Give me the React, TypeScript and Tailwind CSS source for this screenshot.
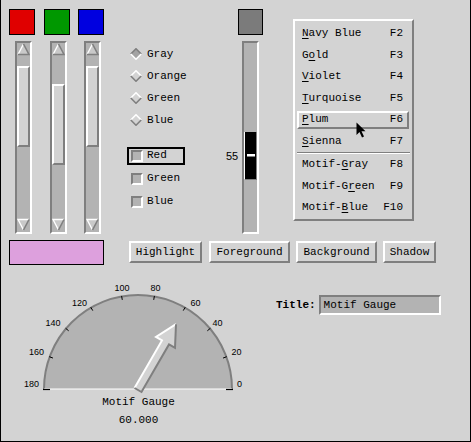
import React from "react";

const radios = [
  { label: "Gray", on: true },
  { label: "Orange", on: false },
  { label: "Green", on: false },
  { label: "Blue", on: false },
];

const checks = [
  { label: "Red", focus: true },
  { label: "Green", focus: false },
  { label: "Blue", focus: false },
];

type Item = { label: string; m: number; acc: string; active?: boolean } | "sep";

const menu: Item[] = [
  { label: "Navy Blue", m: 0, acc: "F2" },
  { label: "Gold", m: 1, acc: "F3" },
  { label: "Violet", m: 0, acc: "F4" },
  { label: "Turquoise", m: 0, acc: "F5" },
  { label: "Plum", m: 0, acc: "F6", active: true },
  { label: "Sienna", m: 0, acc: "F7" },
  "sep",
  { label: "Motif-Gray", m: 6, acc: "F8" },
  { label: "Motif-Green", m: 7, acc: "F9" },
  { label: "Motif-Blue", m: 6, acc: "F10" },
];

function Diamond({ on }: { on: boolean }) {
  return (
    <svg width="12" height="12" viewBox="0 0 12 12">
      <polygon points="6,0.5 11.5,6 6,11.5 0.5,6" fill={on ? "#a3a3a3" : "#d3d3d3"} />
      <polyline points="0.8,6 6,0.8 11.2,6" fill="none" stroke={on ? "#7f7f7f" : "#ffffff"} strokeWidth="1.6" />
      <polyline points="0.8,6 6,11.2 11.2,6" fill="none" stroke={on ? "#ffffff" : "#7f7f7f"} strokeWidth="1.6" />
    </svg>
  );
}

function Arrow({ down }: { down?: boolean }) {
  return (
    <svg width="13" height="13" viewBox="0 0 13 13" className="block">
      {down ? (
        <>
          <polygon points="1,1.5 12,1.5 6.5,12" fill="#c9c9c9" />
          <polyline points="6.5,12 1,1.5 12,1.5" fill="none" stroke="#ffffff" strokeWidth="1.4" />
          <line x1="12" y1="1.5" x2="6.5" y2="12" stroke="#7f7f7f" strokeWidth="1.6" />
        </>
      ) : (
        <>
          <polygon points="6.5,1 12,11.5 1,11.5" fill="#c9c9c9" />
          <line x1="1" y1="11.5" x2="6.5" y2="1" stroke="#ffffff" strokeWidth="1.4" />
          <polyline points="6.5,1 12,11.5 1,11.5" fill="none" stroke="#7f7f7f" strokeWidth="1.6" />
        </>
      )}
    </svg>
  );
}

function ScrollBar({ top }: { top: number }) {
  return (
    <div className="ml-[6px] mt-[6px] w-[17px] h-[193px] flex flex-col bg-[#b3b3b3] border-2 border-t-[#7f7f7f] border-l-[#7f7f7f] border-r-white border-b-white">
      <Arrow />
      <div
        className={`h-[81px] bg-[#d3d3d3] border-2 border-t-white border-l-white border-r-[#7f7f7f] border-b-[#7f7f7f] ${
          top === 10 ? "mt-[10px]" : "mt-[28px]"
        }`}
      />
      <div className="flex-1" />
      <div className="mb-[1px]">
        <Arrow down />
      </div>
    </div>
  );
}

function Gauge() {
  const cx = 138;
  const cy = 389;
  const r = 94;
  const rad = (d: number) => (d * Math.PI) / 180;
  const ticks = [20, 40, 60, 80, 100, 120, 140, 160];
  const labels: [string, number, number][] = [
    ["0", 239.5, 384],
    ["20", 236.5, 352],
    ["40", 217.5, 323],
    ["60", 195.5, 303],
    ["80", 155.5, 288],
    ["100", 122, 288],
    ["120", 79.5, 303],
    ["140", 53, 323],
    ["160", 36.5, 352],
    ["180", 31.5, 384],
  ];
  const a = rad(60);
  const u = [Math.cos(a), -Math.sin(a)];
  const n = [Math.sin(a), Math.cos(a)];
  const c = [138, 390];
  const p = (along: number, side: number) =>
    `${(c[0] + u[0] * along + n[0] * side).toFixed(1)},${(c[1] + u[1] * along + n[1] * side).toFixed(1)}`;
  const tailL = p(0, -4);
  const tailR = p(0, 4);
  const shL = p(55, -4);
  const shR = p(55, 4);
  const hL = p(55, -11);
  const hR = p(55, 11);
  const tip = p(76, 0);

  return (
    <svg width="259" height="176" viewBox="1 265 259 176" className="block">
      <path d={`M ${cx - r} ${cy} A ${r} ${r} 0 0 1 ${cx + r} ${cy} Z`} fill="#b3b3b3" />
      <path d={`M ${cx - r} ${cy} A ${r} ${r} 0 0 1 ${cx + r} ${cy}`} fill="none" stroke="#7f7f7f" strokeWidth="2" />
      <line x1={cx - r} y1={cy} x2={cx + r} y2={cy} stroke="#ffffff" strokeWidth="1" />
      <line x1={cx - r - 1} y1={cy + 0.5} x2={cx - r + 6} y2={cy + 0.5} stroke="#000" strokeWidth="1.2" />
      <line x1={cx + r - 6} y1={cy + 0.5} x2={cx + r + 1} y2={cy + 0.5} stroke="#000" strokeWidth="1.2" />
      {ticks.map((t) => (
        <line
          key={t}
          x1={cx + (r + 0.5) * Math.cos(rad(t))}
          y1={cy - (r + 0.5) * Math.sin(rad(t))}
          x2={cx + (r - 3.5) * Math.cos(rad(t))}
          y2={cy - (r - 3.5) * Math.sin(rad(t))}
          stroke="#000"
          strokeWidth="1"
        />
      ))}
      {labels.map(([t, x, y]) => (
        <text
          key={t}
          x={x}
          y={y}
          textAnchor="middle"
          dominantBaseline="central"
          fontFamily="'Liberation Sans', Arial, sans-serif"
          fontSize="9"
          fill="#000"
        >
          {t}
        </text>
      ))}
      <polygon points={`${tailL} ${shL} ${hL} ${tip} ${hR} ${shR} ${tailR}`} fill="#d3d3d3" />
      <polyline points={`${tailL} ${shL} ${hL} ${tip}`} fill="none" stroke="#ffffff" strokeWidth="2" />
      <polyline points={`${tip} ${hR} ${shR} ${tailR} ${tailL}`} fill="none" stroke="#7f7f7f" strokeWidth="2" />
      <text x="138.5" y="402" textAnchor="middle" dominantBaseline="central" fontFamily="'Liberation Mono', monospace" fontSize="11" fill="#000">
        Motif Gauge
      </text>
      <text x="138.5" y="419.5" textAnchor="middle" dominantBaseline="central" fontFamily="'Liberation Mono', monospace" fontSize="11" fill="#000">
        60.000
      </text>
    </svg>
  );
}

function MenuLabel({ label, m }: { label: string; m: number }) {
  return (
    <span className="whitespace-pre">
      {label.slice(0, m)}
      <span className="underline underline-offset-2">{label[m]}</span>
      {label.slice(m + 1)}
    </span>
  );
}

export default function App() {
  return (
    <div className="relative w-[471px] h-[442px] overflow-hidden bg-[#d3d3d3] border-x border-b border-black font-['Liberation_Mono',monospace] text-[11px] leading-none text-black">
      {/* top row */}
      <div className="flex items-start pt-[9px] pl-[8px]">
        {/* rgb sliders */}
        <div className="flex w-[95px]">
          <div className="w-[26px]">
            <div className="w-[26px] h-[26px] bg-[#e00000] border border-black" />
            <ScrollBar top={10} />
          </div>
          <div className="w-[26px] ml-[9px]">
            <div className="w-[26px] h-[26px] bg-[#009800] border border-black" />
            <ScrollBar top={28} />
          </div>
          <div className="w-[26px] ml-[8px]">
            <div className="w-[26px] h-[26px] bg-[#0000e0] border border-black" />
            <ScrollBar top={10} />
          </div>
        </div>

        {/* radios and checks */}
        <div className="ml-[23px] w-[98px] mt-[34px]">
          {radios.map((r) => (
            <div key={r.label} className="h-[22px] flex items-center pl-[3px]">
              <Diamond on={r.on} />
              <span className="ml-[5px]">{r.label}</span>
            </div>
          ))}
          <div className="mt-[13px]">
            {checks.map((c) => (
              <div key={c.label} className="h-[23px] flex items-center">
                <div
                  className={`w-[58px] h-[18px] flex items-center pl-[2px] border-2 ${
                    c.focus ? "border-black" : "border-transparent"
                  }`}
                >
                  <div className="w-[12px] h-[12px] bg-[#b3b3b3] border-2 border-t-[#7f7f7f] border-l-[#7f7f7f] border-r-white border-b-white" />
                  <span className="ml-[4px]">{c.label}</span>
                </div>
              </div>
            ))}
          </div>
        </div>

        {/* scale */}
        <div className="w-[38px]">
          <div className="ml-[13px] w-[25px] h-[26px] bg-[#7b7b7b] border border-black" />
          <div className="flex mt-[6px]">
            <div className="w-[17px] pl-[1px]">
              <div className="mt-[109px] h-[12px] flex items-center font-['Liberation_Sans',Arial,sans-serif]">55</div>
            </div>
            <div className="w-[17px] h-[193px] bg-[#b3b3b3] border-2 border-t-[#7f7f7f] border-l-[#7f7f7f] border-r-white border-b-white">
              <div className="mt-[89px] w-[13px] h-[48px] bg-black border-l border-l-white border-r border-b border-r-[#7f7f7f] border-b-[#7f7f7f] flex items-center justify-center">
                <div className="w-[8px] h-[3px] bg-white border-b border-b-[#7f7f7f]" />
              </div>
            </div>
          </div>
        </div>

        {/* popup menu */}
        <div className="ml-[30px] mt-[10px] w-[121px] pt-[2px] pb-[0px] border-2 border-t-white border-l-white border-r-[#7f7f7f] border-b-[#7f7f7f]">
          {menu.map((it, i) =>
            it === "sep" ? (
              <div key={i} className="mx-[2px] border-t border-t-[#7f7f7f] border-b border-b-white" />
            ) : (
              <div key={i} className="h-[21.5px] flex items-center pl-[2px] pr-[3px]">
                <div
                  className={`flex-1 h-[18px] flex items-center justify-between pl-[3px] pr-[4px] border-2 ${
                    it.active
                      ? "border-t-white border-l-white border-r-[#7f7f7f] border-b-[#7f7f7f]"
                      : "border-transparent"
                  }`}
                >
                  <MenuLabel label={it.label} m={it.m} />
                  <span>{it.acc}</span>
                </div>
              </div>
            )
          )}
        </div>
      </div>

      {/* second row */}
      <div className="flex items-start mt-[6px] pl-[8px]">
        <div className="w-[95px] h-[25px] bg-[#dda0dd] border border-black" />
        <div className="flex ml-[25px] mt-[1px]">
          {[
            ["Highlight", "w-[73px]", ""],
            ["Foreground", "w-[81px]", "ml-[7px]"],
            ["Background", "w-[81px]", "ml-[6px]"],
            ["Shadow", "w-[53px]", "ml-[6px]"],
          ].map(([t, w, m]) => (
            <div
              key={t}
              className={`${w} ${m} h-[22px] flex items-center justify-center bg-[#d3d3d3] border-2 border-t-white border-l-white border-r-[#7f7f7f] border-b-[#7f7f7f]`}
            >
              {t}
            </div>
          ))}
        </div>
      </div>

      {/* gauge row */}
      <div className="flex">
        <Gauge />
        <div className="ml-[16px] mt-[30px] flex items-center h-[20px]">
          <span className="font-bold">Title:</span>
          <div className="ml-[3px] w-[122px] h-[20px] flex items-center pl-[3px] bg-[#b3b3b3] border-2 border-t-[#7f7f7f] border-l-[#7f7f7f] border-r-white border-b-white">
            Motif Gauge
          </div>
        </div>
      </div>

      {/* pointer cursor over the menu */}
      <svg className="absolute left-[355px] top-[122px]" width="11" height="17" viewBox="0 0 11 17">
        <polygon points="0.5,0.5 0.5,13 3.5,10 6,15.5 8,14.5 5.5,9.2 9.5,9.2" fill="#000" />
      </svg>
    </div>
  );
}
